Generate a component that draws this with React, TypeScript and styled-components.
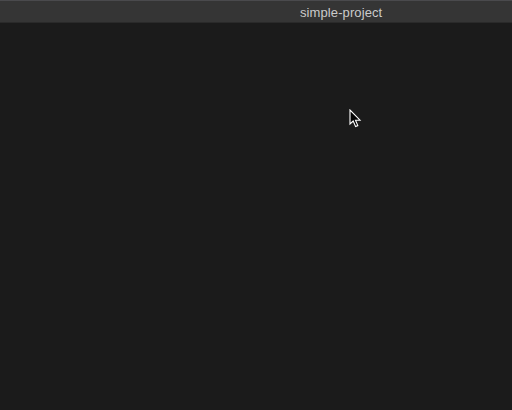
import React from 'react';
import styled, { createGlobalStyle } from 'styled-components';

const GlobalStyle = createGlobalStyle`
	html, body {
		margin: 0;
		padding: 0;
		background: #1b1b1b;
	}
	#root {
		width: 512px;
		height: 410px;
		overflow: hidden;
	}
`;

const Window = styled.div`
	display: flex;
	flex-direction: column;
	width: 512px;
	height: 410px;
	background: #1b1b1b;
	font-family: 'Liberation Sans', Arial, sans-serif;
`;

const TitleBar = styled.div`
	display: flex;
	align-items: center;
	height: 20px;
	padding-left: 300px;
	padding-top: 1px;
	background: #353535;
	border-top: 1px solid #4a4a4d;
	border-bottom: 1px solid #2a2a2a;
	box-sizing: content-box;
`;

const Title = styled.span`
	font-size: 13px;
	color: #cbcbcb;
	letter-spacing: 0.1px;
`;

const Body = styled.div`
	position: relative;
	flex: 1;
`;

// mouse pointer captured in the screenshot, floats over the empty editor
const Pointer = styled.svg`
	position: absolute;
	left: 348px;
	top: 86px;
`;

export default function App() {
	return (
		<>
			<GlobalStyle />
			<Window>
				<TitleBar>
					<Title>simple-project</Title>
				</TitleBar>
				<Body>
					<Pointer width="14" height="20" viewBox="0 0 14 20">
						<path
							d="M2 1 L2 15 L5.2 12 L7.6 17.6 L9.8 16.6 L7.5 11.2 L12 11.2 Z"
							fill="#000"
							stroke="#fff"
							strokeWidth="1.1"
							strokeLinejoin="miter"
						/>
					</Pointer>
				</Body>
			</Window>
		</>
	);
}
